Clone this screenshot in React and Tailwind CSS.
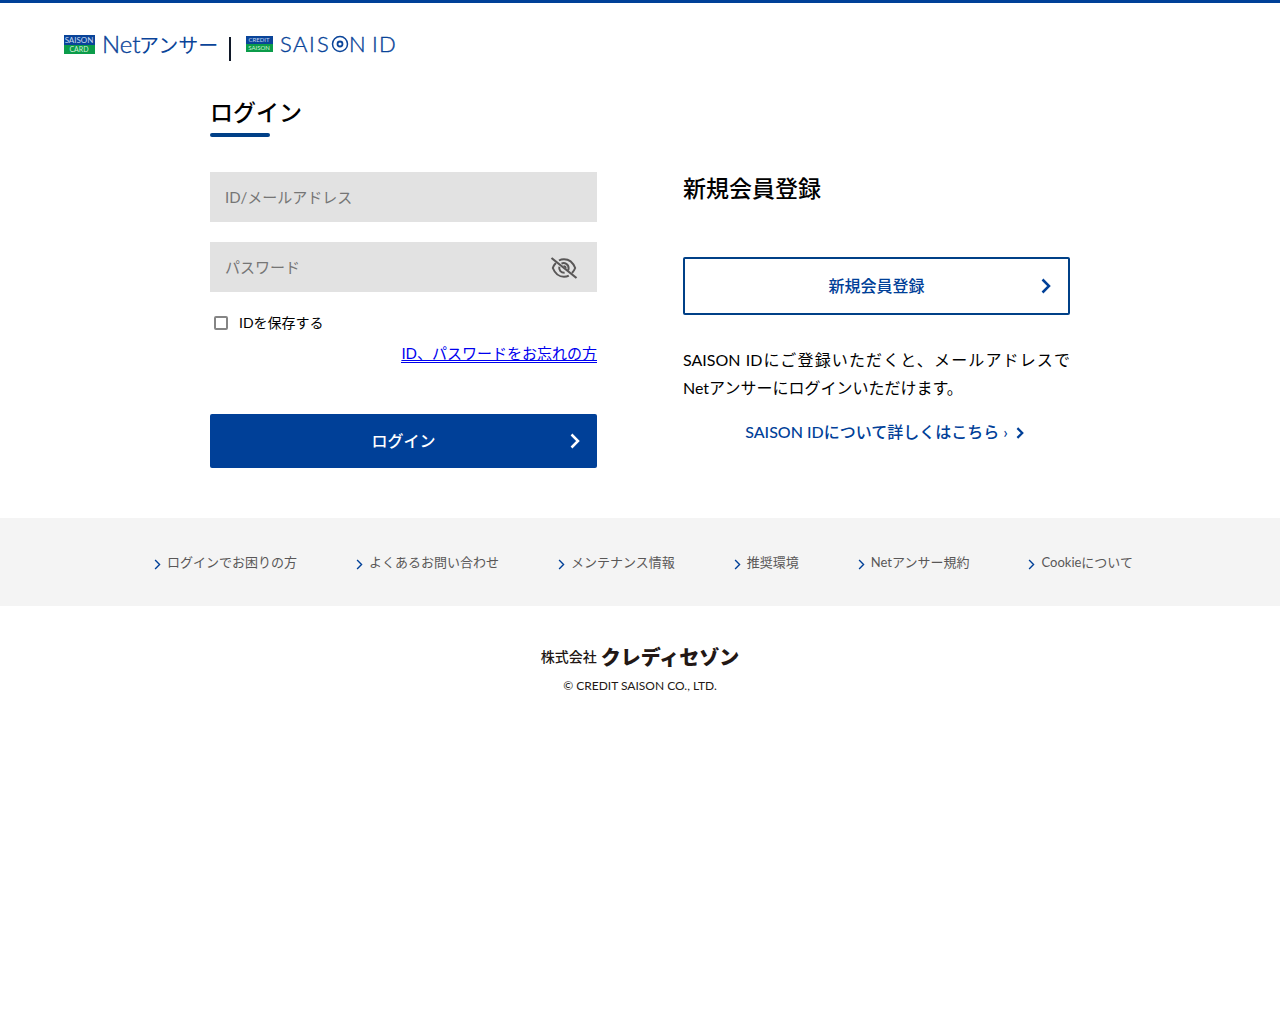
import React from "react";

const footerLinks = [
  "ログインでお困りの方",
  "よくあるお問い合わせ",
  "メンテナンス情報",
  "推奨環境",
  "Netアンサー規約",
  "Cookieについて",
];

function Chevron({ className, strokeWidth }) {
  return (
    <svg viewBox="0 0 10 16" className={className} fill="none" stroke="currentColor" strokeWidth={strokeWidth} aria-hidden="true">
      <path d="M1.5 1.5 L8 8 L1.5 14.5" />
    </svg>
  );
}

function EyeOff() {
  return (
    <svg viewBox="0 0 28 24" className="h-6 w-7" fill="none" stroke="#595757" strokeWidth="2" aria-hidden="true">
      <path d="M9 4.500 C10.500 3.600 12.200 3.200 14 3.200 C19 3.200 23 6.500 25.200 12 C24.400 14 23.300 15.700 22 17" />
      <path d="M18.800 19.600 C17.400 20.400 15.800 20.800 14 20.800 C9 20.800 5 17.500 2.800 12 C3.500 10 4.600 8.300 5.900 7" />
      <path d="M11.500 7.600 C14.500 6 18.800 8.300 18.600 12.300 C18.600 13.100 18.400 13.800 18 14.400" />
      <path d="M9.300 10.800 C8.700 14 11 16.900 14.600 16.800" />
      <path d="M13.500 10 C15 10 16 11 16 12.600" strokeWidth="1.300" />
      <path d="M1.500 2 L26.500 22" strokeWidth="2.200" />
    </svg>
  );
}

function NetAnswerLogo() {
  return (
    <svg viewBox="-2 -8 160 40" className="h-10 w-40" role="img" aria-label="SAISON CARD Netアンサー" fontFamily="Lato, sans-serif">
      <rect x="0" y="2" width="31" height="10" fill="#0a4499" />
      <rect x="0" y="12" width="31" height="9" fill="#0b9c4a" />
      <text x="15" y="10" textAnchor="middle" fontSize="8" fill="#c5d8f0">SAISON</text>
      <text x="15" y="19" textAnchor="middle" fontSize="7" fill="#d0f0d8">CARD</text>
      <text x="38" y="20" fontSize="24" fontWeight="300" fill="#0a4499" stroke="#0a4499" strokeWidth="0.4">Net</text>
      <text x="75" y="20" fontSize="20" fontFamily="'Noto Sans CJK JP', sans-serif" fill="#0a4499">アンサー</text>
    </svg>
  );
}

function SaisonIdLogo() {
  return (
    <svg viewBox="-2 -8 156 40" className="h-10 w-[156px]" role="img" aria-label="CREDIT SAISON SAISON ID" fontFamily="Lato, sans-serif">
      <rect x="0" y="3" width="27" height="8" fill="#0a4499" />
      <rect x="0" y="11" width="27" height="8" fill="#0b9c4a" />
      <text x="13" y="9" textAnchor="middle" fontSize="6" fill="#c5d8f0">CREDIT</text>
      <text x="13" y="17" textAnchor="middle" fontSize="6" fill="#d0f0d8">SAISON</text>
      <g fontSize="22" fontWeight="300" fill="#0a4499" stroke="#0a4499" strokeWidth="0.4">
        <text x="34" y="19">S</text>
        <text x="47" y="19">A</text>
        <text x="63" y="19">I</text>
        <text x="71" y="19">S</text>
        <text x="103" y="19">N</text>
        <text x="126" y="19">I</text>
        <text x="133" y="19">D</text>
      </g>
      <g fill="none" stroke="#0a4499">
        <circle cx="94" cy="11" r="7.500" strokeWidth="1.500" />
        <circle cx="94" cy="11" r="2.500" strokeWidth="1.800" />
      </g>
    </svg>
  );
}

export default function App() {
  return (
    <div className="min-h-screen border-t-3 border-[#004098] bg-white font-['Lato','Noto_Sans_CJK_JP',sans-serif] text-black">
      <header className="flex h-[84px] px-[62px] pt-[22px]">
        <a href="#" aria-label="Netアンサー" className="block h-10"><NetAnswerLogo /></a>
        <span className="mt-3 ml-[7px] h-6 w-0.5 bg-[#101828]" aria-hidden="true" />
        <a href="#" aria-label="SAISON ID" className="ml-[13px] block h-10"><SaisonIdLogo /></a>
      </header>

      <main className="mx-auto w-full max-w-[860px] pb-[50px]">
        <h1 className="pt-2 text-[23px] leading-[34px] font-medium">ログイン</h1>
        <div className="mt-1 h-1 w-[60px] rounded-sm bg-[#004087]" />

        <div className="mt-[35px] grid grid-cols-2 gap-[86px]">
          <form onSubmit={(e) => e.preventDefault()}>
            <input type="text" aria-label="ID/メールアドレス" placeholder="ID/メールアドレス" className="block h-[50px] w-full bg-[#e2e2e2] px-[15px] text-[15px] placeholder:text-[#757575]" />
            <div className="relative mt-5">
              <input type="password" aria-label="パスワード" placeholder="パスワード" className="block h-[50px] w-full bg-[#e2e2e2] pr-16 pl-[15px] text-[15px] placeholder:text-[#757575]" />
              <button type="button" aria-label="パスワードを表示" className="absolute top-[14px] right-[19px]"><EyeOff /></button>
            </div>
            <div className="mt-5 flex h-[22px] items-center gap-[11px] pl-1">
              <input id="save-id" type="checkbox" className="size-[14px] appearance-none rounded-xs border-2 border-[#858585] bg-white checked:bg-[#004098]" />
              <label htmlFor="save-id" className="text-sm">IDを保存する</label>
            </div>
            <div className="mt-2 text-right text-[15px] leading-[22px]">
              <a href="#" className="border-b border-[#0000ee] text-[#0000ee] underline">ID、パスワードをお忘れの方</a>
            </div>
            <button type="submit" className="relative mt-[50px] flex h-[54px] w-full items-center justify-center rounded-xs bg-[#004098] text-base font-medium text-white">
              ログイン
              <Chevron strokeWidth={2.5} className="absolute right-[17px] h-4 w-[10px]" />
            </button>
          </form>

          <section>
            <h2 className="text-[23px] leading-8 font-medium">新規会員登録</h2>
            <a href="#" className="relative mt-[53px] flex h-[58px] items-center justify-center rounded-xs border-2 border-[#004087] text-base font-medium text-[#004098]">
              新規会員登録
              <Chevron strokeWidth={2.5} className="absolute right-[17px] h-4 w-[10px]" />
            </a>
            <p className="mt-[31px] text-justify text-base leading-7">
              SAISON IDにご登録いただくと、メールアドレスでNetアンサーにログインいただけます。
            </p>
            <div className="mt-4 flex justify-center pl-4">
              <a href="#" className="flex items-center gap-2 text-base leading-7 font-medium text-[#004098]">
                SAISON IDについて詳しくはこちら ›
                <Chevron strokeWidth={3} className="mt-0.5 h-3 w-2" />
              </a>
            </div>
          </section>
        </div>
      </main>

      <footer>
        <nav className="flex h-[88px] items-center justify-center gap-[59px] bg-[#f4f4f4] pt-0.5 pl-[7px]">
          {footerLinks.map((text) => (
            <a key={text} href="#" className="flex items-center gap-1.5 text-[13px] text-[#595757]">
              <Chevron strokeWidth={2} className="mt-0.5 h-[11px] w-[7px] text-[#004098]" />
              {text}
            </a>
          ))}
        </nav>
        <div className="flex flex-col items-center pt-9">
          <div className="flex items-center gap-1 text-[#231815]">
            <span className="text-sm leading-[30px] font-medium">株式会社</span>
            <span className="text-xl leading-[30px] font-black">クレディセゾン</span>
          </div>
          <small className="mt-1 text-xs leading-5 text-[#231815]">© CREDIT SAISON CO., LTD.</small>
        </div>
      </footer>
    </div>
  );
}
